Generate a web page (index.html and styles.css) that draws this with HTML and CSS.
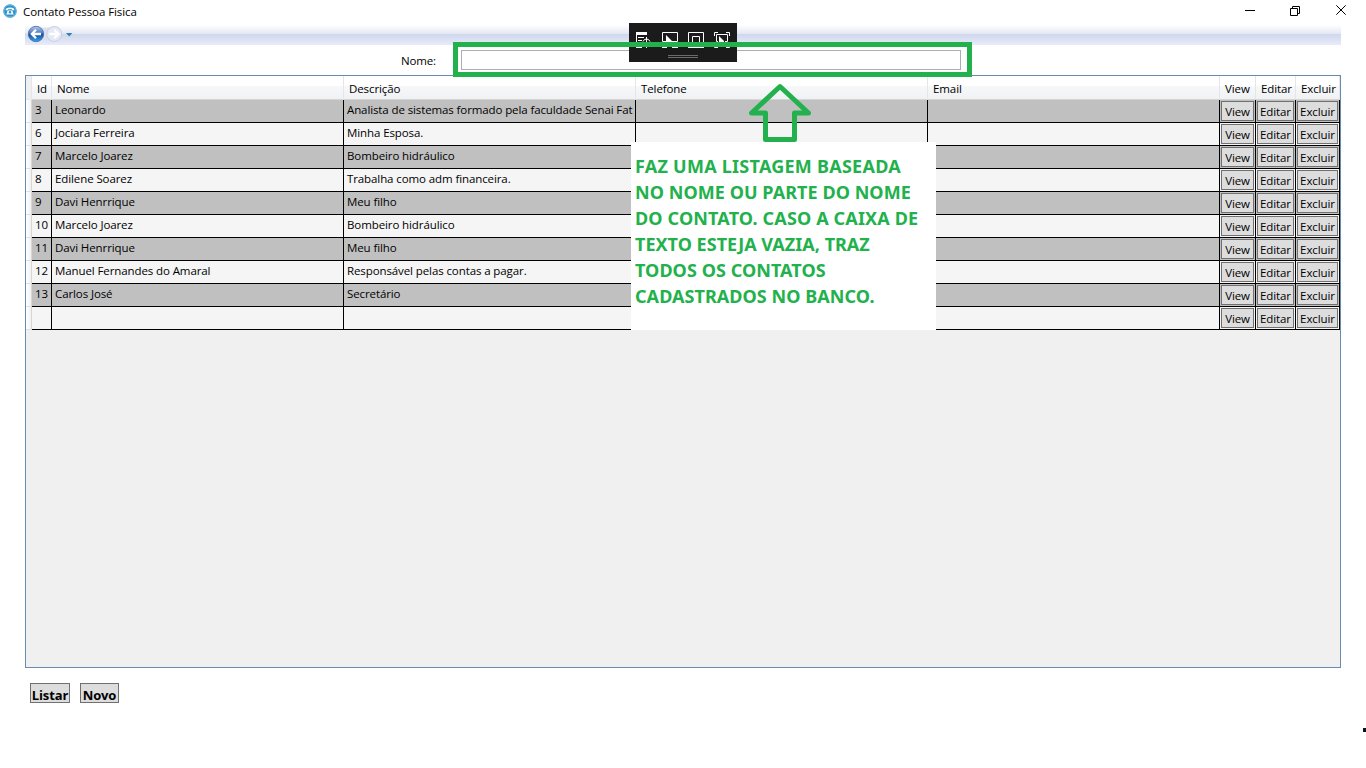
FILE: index.html
```html
<!DOCTYPE html>
<html lang="pt-BR">
<head>
<meta charset="utf-8">
<title>Contato Pessoa Fisica</title>
<link rel="stylesheet" href="styles.css">
</head>
<body>
<div class="window">
  <header class="titlebar">
    <svg class="app-icon" width="14" height="14" viewBox="0 0 14 14"><circle cx="7" cy="7" r="6.6" fill="#2a93cb"/><circle cx="7" cy="7" r="6.200" fill="none" stroke="#68b5dc" stroke-width="1.200"/><path d="M2.6 6.2Q2.5 3.4 7 3.4t4.4 2.8H9.2V5.2H4.8v1z" fill="#fff"/><path d="M4.6 6.4h4.8l1.2 4.1H3.4z" fill="#fff"/><circle cx="7" cy="8.3" r="1.2" fill="#2a93cb"/></svg>
    <span class="title">Contato Pessoa Fisica</span>
    <svg class="controls" width="104" height="12" viewBox="0 0 104 12" fill="none" stroke="#000"><path d="M0 5.5h10"/><path d="M45.500 3.500h7v7h-7zM47.500 3v-1.500h7v7h-1.500"/><path d="M91.300.300l9.400 9.400M100.700.300l-9.400 9.400"/></svg>
  </header>
  <nav class="navbar">
    <svg width="50" height="20" viewBox="0 0 50 20">
      <defs>
        <linearGradient id="blue" x1="0" y1="0" x2="0" y2="1"><stop offset="0" stop-color="#b7cae8"/><stop offset=".45" stop-color="#4b78c0"/><stop offset=".5" stop-color="#174a9c"/><stop offset="1" stop-color="#35a4ec"/></linearGradient>
      </defs>
      <path d="M10 1.500Q20 4 30 1.500V16q-10-2-20 0z" fill="#dbe0f0"/>
      <circle cx="11" cy="9" r="7.700" fill="url(#blue)" stroke="#436ba8" stroke-width=".8"/>
      <path d="M16 9H7.500M11 4.800L6.800 9l4.200 4.200" fill="none" stroke="#fff" stroke-width="2.300"/>
      <circle cx="29.300" cy="9" r="7.500" fill="#e5e9f5" stroke="#c8cfe2"/>
      <path d="M24.300 9h8.500M29.300 4.800L33.500 9l-4.200 4.200" fill="none" stroke="#fff" stroke-width="2.300"/>
      <path d="M41 8h6.400l-3.200 3.500z" fill="#2b86b5"/>
    </svg>
  </nav>
  <div class="filter"><label class="filter-label" for="nome">Nome:</label><input class="filter-input" id="nome" type="text"></div>
  <main class="grid">
    <div class="row head"><i class="rh"></i><div>Id</div><div>Nome</div><div>Descrição</div><div>Telefone</div><div>Email</div><div>View</div><div>Editar</div><div>Excluir</div></div>
    <div class="row odd"><i class="rh"></i><div>3</div><div>Leonardo</div><div class="long">Analista de sistemas formado pela faculdade Senai Fat</div><div></div><div></div><div><button>View</button></div><div><button>Editar</button></div><div><button>Excluir</button></div></div>
    <div class="row"><i class="rh"></i><div>6</div><div>Jociara Ferreira</div><div>Minha Esposa.</div><div></div><div></div><div><button>View</button></div><div><button>Editar</button></div><div><button>Excluir</button></div></div>
    <div class="row odd"><i class="rh"></i><div>7</div><div>Marcelo Joarez</div><div>Bombeiro hidráulico</div><div></div><div></div><div><button>View</button></div><div><button>Editar</button></div><div><button>Excluir</button></div></div>
    <div class="row"><i class="rh"></i><div>8</div><div>Edilene Soarez</div><div>Trabalha como adm financeira.</div><div></div><div></div><div><button>View</button></div><div><button>Editar</button></div><div><button>Excluir</button></div></div>
    <div class="row odd"><i class="rh"></i><div>9</div><div>Davi Henrrique</div><div>Meu filho</div><div></div><div></div><div><button>View</button></div><div><button>Editar</button></div><div><button>Excluir</button></div></div>
    <div class="row"><i class="rh"></i><div>10</div><div>Marcelo Joarez</div><div>Bombeiro hidráulico</div><div></div><div></div><div><button>View</button></div><div><button>Editar</button></div><div><button>Excluir</button></div></div>
    <div class="row odd"><i class="rh"></i><div>11</div><div>Davi Henrrique</div><div>Meu filho</div><div></div><div></div><div><button>View</button></div><div><button>Editar</button></div><div><button>Excluir</button></div></div>
    <div class="row"><i class="rh"></i><div>12</div><div>Manuel Fernandes do Amaral</div><div>Responsável pelas contas a pagar.</div><div></div><div></div><div><button>View</button></div><div><button>Editar</button></div><div><button>Excluir</button></div></div>
    <div class="row odd"><i class="rh"></i><div>13</div><div>Carlos José</div><div>Secretário</div><div></div><div></div><div><button>View</button></div><div><button>Editar</button></div><div><button>Excluir</button></div></div>
    <div class="row"><i class="rh"></i><div></div><div></div><div></div><div></div><div></div><div><button>View</button></div><div><button>Editar</button></div><div><button>Excluir</button></div></div>
  </main>
  <footer class="actions"><button class="listar">Listar</button><button class="novo">Novo</button></footer>

  <div class="debug-bar">
    <svg width="108" height="39" viewBox="0 0 108 39" fill="none" stroke="#fff">
      <path d="M7 9h11v3H7z" fill="#fff" stroke="none"/><path d="M7.500 12v13M9 14.500h6M9 17.500h4M7 24.500h6M14 18.500q1-2.500 3.500-2.500t3.500 2.500M17.500 14v11"/>
      <path d="M37 18.500h-3.500v-9h15v9H43M33 24.500h5M43 24.500h6"/><path d="M37 12l6 6v1h-6z" fill="#fff" stroke="none"/>
      <path d="M59.500 25V9.500h15V25M59.500 24.500h15M63.500 20v-6.500h7V20"/>
      <path d="M85.500 13V9.500H89M97 9.500h3.500V13M89 18.500h-1.500v-7h11v7H96M85.500 21v3.500H89M97 24.500h3.500V21"/><path d="M90 13l5 5v1h-5z" fill="#fff" stroke="none"/>
      <path d="M39 32.500h30M39 34.500h30" stroke="#6b6b6b"/>
    </svg>
  </div>
  <div class="highlight"></div>
  <svg class="arrow" width="66" height="62" viewBox="747 82 66 62" fill="none" stroke="#22b14c" stroke-width="5" stroke-linejoin="round" stroke-linecap="round"><path d="M780 86.500L751.500 113h14v26.500h29V113h14z"/></svg>
  <div class="note"><span class="n1">FAZ UMA LISTAGEM BASEADA</span><span class="n2">NO NOME OU PARTE DO NOME</span><span class="n3">DO CONTATO. CASO A CAIXA DE</span><span class="n4">TEXTO ESTEJA VAZIA, TRAZ</span><span class="n5">TODOS OS CONTATOS</span><span class="n6">CADASTRADOS NO BANCO.</span></div>
  <div class="speck"></div>
</div>
</body>
</html>
```
FILE: styles.css
```css
* { box-sizing: border-box; }
body { margin: 0; background: #fff; color: #000; font: 12px/16px "Open Sans", "Noto Sans", sans-serif; }
.window { position: relative; width: 1366px; height: 768px; overflow: hidden; }
.titlebar { height: 25px; display: flex; align-items: flex-start; padding: 4px 18px 0 3px; }
.app-icon { margin: 0 6px 0 0; }
.title { flex: 1; font-size: 11.5px; letter-spacing: -.08px; }
.controls { margin: 1px -1px 0 0; }
.navbar { height: 20px; margin: 0 25px; background: linear-gradient(#fff 0, #e3e7f4 45%, #cfd7eb 45%, #e8ebfa 100%); }
.navbar svg { display: block; }
.filter { height: 30px; display: flex; padding: 5px 0 0 401px; }
.filter-label { width: 60px; padding-top: 3px; font-size: 11.5px; letter-spacing: -.15px; }
.filter-input { width: 500px; height: 20px; border: 1px solid #abadb3; padding: 0; background: #fff; }
.grid { width: 1316px; height: 593px; margin-left: 25px; border: 1px solid #688caf; background: #f0f0f0; overflow: hidden; font-size: 11.5px; letter-spacing: -.1px; }
.row { display: grid; grid-template-columns: 6px 20px 292px 292px 292px 292px 36px 40px 44px; height: 23px; width: 1314px; background: #f5f5f5; }
.row > div { border-right: 1px solid #000; border-bottom: 1px solid #000; padding: 2px 3px 0; white-space: nowrap; overflow: hidden; }
.row > div:nth-child(n+7) { padding: 1px; }
.row > .long { padding-right: 0; letter-spacing: -.11px; }
.odd { background: #c0c0c0; }
.rh { background: linear-gradient(90deg, #fff, #f1f2f4); border-right: 1px solid #d5d5d5; border-bottom: 1px solid #dfe1e4; }
.head { height: 24px; background: linear-gradient(#fff 0, #fff 40%, #f7f8f9 41%, #f0f1f3 100%); }
.head > div, .head > div:nth-child(n+7) { border-right-color: #e4e6e9; border-bottom-color: #d5d5d5; padding: 5px 0 0 5px; }
.head > i { background: #f0f0f0; border-color: #e4e6e9; }
.grid button { display: block; width: 100%; height: 20px; padding: 1px 0 0; border: 1px solid #707070; background: #ddd; font: inherit; letter-spacing: inherit; color: #000; white-space: nowrap; }
.actions { display: flex; gap: 10px; padding: 15px 0 0 30px; }
.actions button { height: 20px; padding: 3px 0 0; border: 1px solid #707070; background: #ddd; color: #000; font: bold 13px/16px "Open Sans", sans-serif; letter-spacing: -.1px; white-space: nowrap; }
.listar { width: 40px; }
.novo { width: 39px; }
.debug-bar { position: absolute; left: 629px; top: 23px; width: 108px; height: 39px; background: #1b1b1c; }
.highlight { position: absolute; left: 453px; top: 42px; width: 519px; height: 35px; border: 5px solid #22b14c; }
.arrow { position: absolute; left: 747px; top: 82px; }
.note { position: absolute; left: 631px; top: 142px; width: 305px; height: 188px; padding: 11px 4px 0; background: #fff; color: #22b14c; font: bold 18px/26px "Noto Sans", sans-serif; white-space: nowrap; }
.note span { display: table; }
.n1 { letter-spacing: .25px; }
.n2 { letter-spacing: .06px; }
.n3 { letter-spacing: .15px; }
.n4 { letter-spacing: .02px; }
.n5, .n6 { letter-spacing: .06px; }
.speck { position: absolute; left: 1363px; top: 728px; width: 3px; height: 4px; background: #0a121c; }
```
